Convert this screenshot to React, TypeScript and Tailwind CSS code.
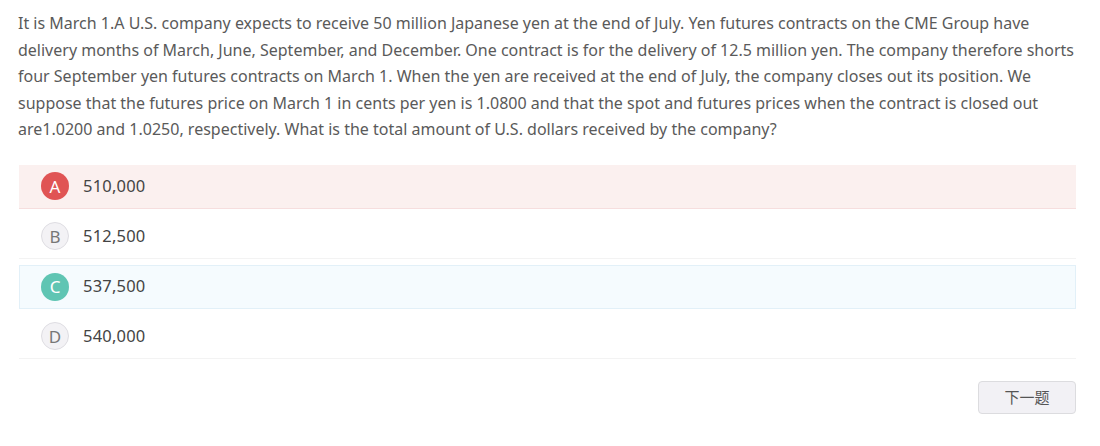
const options = [
  { key: 'A', text: '510,000', state: 'wrong' },
  { key: 'B', text: '512,500', state: 'none' },
  { key: 'C', text: '537,500', state: 'right' },
  { key: 'D', text: '540,000', state: 'none' },
];

export default function App() {
  return (
    <div className="w-[1100px] h-[446px] bg-white px-[18px] pt-[10px] text-[#5a5a5a]" style={{ fontFamily: '"Noto Sans", "Noto Sans CJK SC", sans-serif' }}>
      <p className="text-[16px] leading-[26.5px]">
        It is March 1.A U.S. company expects to receive 50 million Japanese yen at the end of July. Yen futures contracts on the CME Group have delivery months of March, June, September, and December. One contract is for the delivery of 12.5 million yen. The company therefore shorts four September yen futures contracts on March 1. When the yen are received at the end of July, the company closes out its position. We suppose that the futures price on March 1 in cents per yen is 1.0800 and that the spot and futures prices when the contract is closed out are1.0200 and 1.0250, respectively. What is the total amount of U.S. dollars received by the company?
      </p>

      <div className="mt-[22px] ml-px w-[1057px] flex flex-col gap-[6px]">
        {options.map((o) => (
          <div
            key={o.key}
            className={
              'h-[44px] flex items-center gap-[14px] ' +
              (o.state === 'wrong'
                ? 'pl-[22px] bg-[#fbf0ef] border-b border-[#f6dede]'
                : o.state === 'right'
                ? 'pl-[21px] bg-[#f5fbfe] border border-[#e2f0f8]'
                : 'pl-[22px] border-b border-[#f3f3f3]')
            }
          >
            <span
              className={
                'shrink-0 w-[28px] h-[28px] rounded-full flex items-center justify-center text-[17px] leading-none ' +
                (o.state === 'wrong'
                  ? 'bg-[#e05454] text-white'
                  : o.state === 'right'
                  ? 'bg-[#5fc5b3] text-white'
                  : 'bg-[#f3f2f5] border border-[#dedde2] text-[#777]')
              }
            >
              {o.key}
            </span>
            <span className="text-[16.5px] tracking-[0.2px] text-[#444]">{o.text}</span>
          </div>
        ))}
      </div>

      <div className="flex justify-end w-[1058px] mt-[22px]">
        <button className="w-[98px] h-[33px] rounded-[4px] bg-[#f2f1f5] border border-[#dcdcdf] text-[15px] text-[#555]">
          下一题
        </button>
      </div>
    </div>
  );
}
